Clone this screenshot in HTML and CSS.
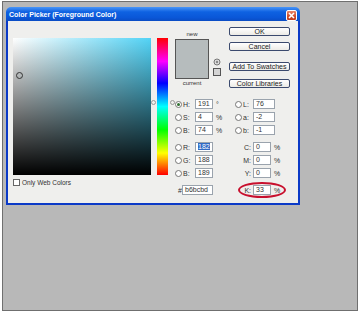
FILE: index.html
```html
<!doctype html>
<html>
<head>
<meta charset="utf-8">
<title>Color Picker</title>
<link rel="stylesheet" href="styles.css">
</head>
<body>
	<div class="screen">
		<div class="dialog">
			<div class="titlebar">
				<span class="title">Color Picker (Foreground Color)</span>
				<span class="close">
					<svg width="9" height="9" viewBox="0 0 9 9"><path d="M2 2L7 7M7 2L2 7" stroke="#fff" stroke-width="1.6"/></svg>
				</span>
			</div>
			<div class="content">
				<div class="left">
					<div class="field"><span class="pick"></span></div>
					<div class="webonly"><span class="check"></span>Only Web Colors</div>
				</div>
				<div class="hue"><span class="mark l"></span><span class="mark r"></span></div>
				<div class="right">
					<div class="top">
						<div class="preview">
							<div class="cap">new</div>
							<div class="swatch"></div>
							<div class="cap">current</div>
						</div>
						<div class="icons">
							<svg width="8" height="8" viewBox="0 0 8 8"><circle cx="4" cy="4" r="3" fill="#ddd" stroke="#777"/><circle cx="4" cy="4" r="1.2" fill="#888"/></svg>
							<svg width="8" height="8" viewBox="0 0 8 8"><rect x="0.5" y="0.5" width="7" height="7" fill="#d4d4d4" stroke="#555"/></svg>
						</div>
						<div class="buttons">
							<button class="btn">OK</button>
							<button class="btn cancel">Cancel</button>
							<button class="btn add">Add To Swatches</button>
							<button class="btn lib">Color Libraries</button>
						</div>
					</div>
					<div class="values">
						<div class="vcol a">
							<div class="row"><span class="radio on"></span><span class="lbl">H:</span><span class="box">191</span><span class="unit">°</span></div>
							<div class="row"><span class="radio"></span><span class="lbl">S:</span><span class="box">4</span><span class="unit">%</span></div>
							<div class="row"><span class="radio"></span><span class="lbl">B:</span><span class="box">74</span><span class="unit">%</span></div>
							<div class="row sep"><span class="radio"></span><span class="lbl">R:</span><span class="box sel"><span>182</span></span></div>
							<div class="row"><span class="radio"></span><span class="lbl">G:</span><span class="box">188</span></div>
							<div class="row"><span class="radio"></span><span class="lbl">B:</span><span class="box">189</span></div>
							<div class="row sep"><span class="hash">#</span><span class="box hex">b6bcbd</span></div>
						</div>
						<div class="vcol b">
							<div class="row"><span class="radio"></span><span class="lbl">L:</span><span class="box lab">76</span></div>
							<div class="row"><span class="radio"></span><span class="lbl">a:</span><span class="box lab">-2</span></div>
							<div class="row"><span class="radio"></span><span class="lbl">b:</span><span class="box lab">-1</span></div>
							<div class="row sep"><span class="lbl wide">C:</span><span class="box">0</span><span class="unit">%</span></div>
							<div class="row"><span class="lbl wide">M:</span><span class="box">0</span><span class="unit">%</span></div>
							<div class="row"><span class="lbl wide">Y:</span><span class="box">0</span><span class="unit">%</span></div>
							<div class="row sep"><span class="lbl wide">K:</span><span class="box">33</span><span class="unit">%</span><span class="ring"></span></div>
						</div>
					</div>
				</div>
			</div>
		</div>
	</div>
</body>
</html>
```

FILE: styles.css
```css
body {
	margin: 0;
	background: #fff;
	font-family: "Liberation Sans", Arial, sans-serif;
	font-size: 7px;
	color: #333;
}
.screen {
	box-sizing: border-box;
	width: 356px;
	height: 310px;
	margin: 1px 0 0 2px;
	padding: 5px 0 0 3px;
	border: 1px solid #6f6f6f;
	background: #b8b8b8;
}
.dialog {
	display: flex;
	flex-direction: column;
	width: 294px;
	height: 198px;
}
.titlebar {
	display: flex;
	align-items: center;
	justify-content: space-between;
	height: 14px;
	padding: 0 3px;
	border-radius: 5px 5px 0 0;
	background: linear-gradient(#4a95f7, #0e62e2 35%, #0a57d8 75%, #0a4cc4);
	color: #fff;
	font-weight: bold;
}
.close {
	display: flex;
	align-items: center;
	justify-content: center;
	box-sizing: border-box;
	width: 11px;
	height: 11px;
	margin-top: 3px;
	border: 1px solid #fff;
	border-radius: 2px;
	background: linear-gradient(#e8866b, #d04d2a 60%, #c33d1c);
}
.content {
	flex: 1;
	display: flex;
	padding: 6px 0 0 5px;
	border: 2px solid #0b3ac7;
	border-top: 0;
	background: #efefed;
}

/* colour field */
.left {
	width: 138px;
	padding-top: 11px;
}
.field {
	position: relative;
	width: 138px;
	height: 137px;
	background: linear-gradient(to top, #000, rgba(0,0,0,0)), linear-gradient(to right, #fff, #52d3f6);
}
.pick {
	position: absolute;
	left: 3px;
	top: 34px;
	width: 5px;
	height: 5px;
	border: 1px solid #333;
	border-radius: 50%;
}
.webonly {
	display: flex;
	align-items: center;
	margin-top: 4px;
	font-size: 6.5px;
}
.check {
	width: 5px;
	height: 5px;
	margin-right: 2px;
	border: 1px solid #666;
	background: #fff;
}
.hue {
	position: relative;
	width: 11px;
	height: 137px;
	margin: 11px 0 0 6px;
	background: linear-gradient(#f00, #f0f 17%, #00f 33%, #0ff 50%, #0f0 67%, #ff0 84%, #f00);
}
.mark {
	position: absolute;
	top: 62px;
	width: 3px;
	height: 3px;
	border: 1px solid #999;
	border-radius: 50%;
}
.mark.l { left: -6px; }
.mark.r { left: 13px; }

/* right side */
.right {
	width: 116px;
	margin-left: 7px;
}
.top {
	display: flex;
	height: 62px;
}
.preview {
	width: 34px;
	margin-top: 3px;
	text-align: center;
}
.cap {
	line-height: 8px;
	font-size: 6px;
}
.swatch {
	height: 38px;
	margin-top: 1px;
	border: 1px solid #555;
	background: #b6bcbd;
}
.icons {
	display: flex;
	flex-direction: column;
	gap: 2px;
	width: 9px;
	margin-left: 4px;
	padding-top: 31px;
}
.buttons {
	display: flex;
	flex-direction: column;
	width: 61px;
	margin-left: 7px;
}
.btn {
	height: 9px;
	padding: 0;
	border: 1px solid #3b4a6e;
	border-radius: 2px;
	background: linear-gradient(#fff, #ecebe6);
	font: inherit;
	line-height: 7px;
	color: #222;
}
.btn.cancel { margin-top: 6px; }
.btn.add { margin-top: 11px; }
.btn.lib { margin-top: 8px; }

/* value fields */
.values {
	display: flex;
	margin-top: 10px;
}
.vcol {
	display: flex;
	flex-direction: column;
	gap: 3px;
}
.vcol.a { width: 60px; }
.row {
	position: relative;
	display: flex;
	align-items: center;
	height: 10px;
}
.row.sep { margin-top: 4px; }
.radio {
	position: relative;
	width: 5px;
	height: 5px;
	margin-right: 1px;
	border: 1px solid #777;
	border-radius: 50%;
	background: #fff;
}
.radio.on::after {
	content: '';
	position: absolute;
	left: 1px;
	top: 1px;
	width: 3px;
	height: 3px;
	border-radius: 50%;
	background: #2f6f2f;
}
.lbl { width: 12px; }
.vcol.b .lbl { width: 10px; }
.vcol.b .lbl.wide {
	width: 18px;
	padding-right: 2px;
	box-sizing: border-box;
	text-align: right;
}
.box {
	box-sizing: border-box;
	width: 18px;
	height: 10px;
	padding-left: 2px;
	border: 1px solid #9aa3ad;
	background: #fff;
	line-height: 8px;
}
.box.lab { width: 22px; }
.box.hex { width: 31px; }
.box.sel span {
	background: #316ac5;
	color: #fff;
}
.hash {
	width: 4px;
	margin-left: 3px;
}
.unit { margin-left: 3px; }
.ring {
	position: absolute;
	left: 3px;
	top: -3px;
	box-sizing: border-box;
	width: 48px;
	height: 16px;
	border: 2px solid #c8102e;
	border-radius: 50%;
}
```
